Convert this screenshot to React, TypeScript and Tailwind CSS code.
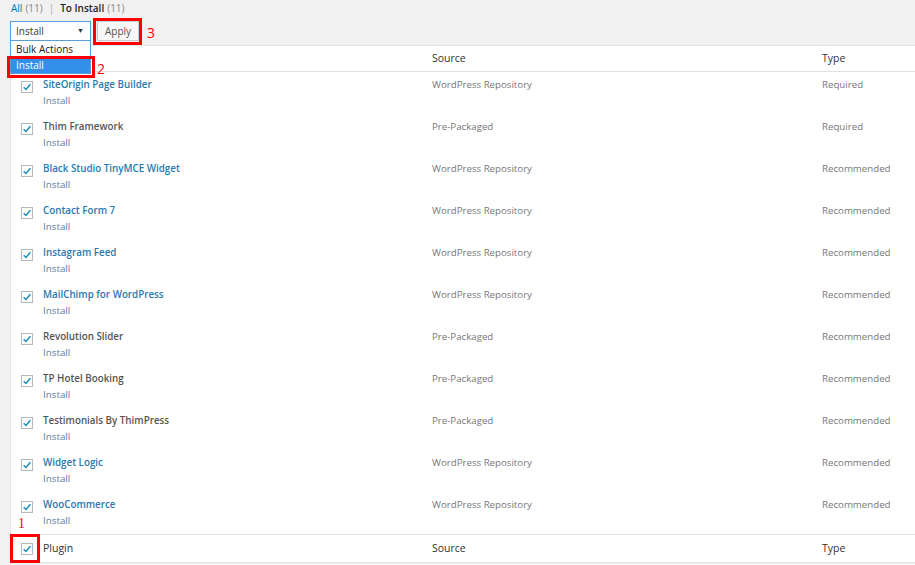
import React from "react";

type Plugin = { name: string; source: string; type: string; link: boolean };

const plugins: Plugin[] = [
  { name: "SiteOrigin Page Builder", source: "WordPress Repository", type: "Required", link: true },
  { name: "Thim Framework", source: "Pre-Packaged", type: "Required", link: false },
  { name: "Black Studio TinyMCE Widget", source: "WordPress Repository", type: "Recommended", link: true },
  { name: "Contact Form 7", source: "WordPress Repository", type: "Recommended", link: true },
  { name: "Instagram Feed", source: "WordPress Repository", type: "Recommended", link: true },
  { name: "MailChimp for WordPress", source: "WordPress Repository", type: "Recommended", link: true },
  { name: "Revolution Slider", source: "Pre-Packaged", type: "Recommended", link: false },
  { name: "TP Hotel Booking", source: "Pre-Packaged", type: "Recommended", link: false },
  { name: "Testimonials By ThimPress", source: "Pre-Packaged", type: "Recommended", link: false },
  { name: "Widget Logic", source: "WordPress Repository", type: "Recommended", link: true },
  { name: "WooCommerce", source: "WordPress Repository", type: "Recommended", link: true },
];

function Check() {
  return (
    <span className="flex h-[12px] w-[12px] items-center justify-center border border-[#b4b9be] bg-white">
      <svg viewBox="0 0 12 12" className="h-[10px] w-[10px]">
        <path d="M2 6.2 L4.8 9 L10 2.6" fill="none" stroke="#1e8cbe" strokeWidth="1.8" />
      </svg>
    </span>
  );
}

export default function App() {
  return (
    <div
      className="relative h-[565px] w-[915px] overflow-hidden bg-[#f1f1f1] text-[10px] text-[#444]"
      style={{ fontFamily: '"Open Sans", "Liberation Sans", sans-serif' }}
    >
      {/* status filter */}
      <div className="flex h-[18px] items-center pl-[11px] pb-[1px] text-[10px]">
        <span className="text-[#0073aa]">All</span>
        <span className="ml-[3px] text-[#888]">(11)</span>
        <span className="mx-[6px] text-[#aaa]">|</span>
        <span className="font-semibold text-[#222]">To Install</span>
        <span className="ml-[3px] text-[#888]">(11)</span>
      </div>

      {/* bulk actions bar */}
      <div className="flex h-[27px] items-start gap-[6px] pl-[10px] pt-[3px]">
        <div className="flex h-[20px] w-[81px] items-center justify-between border border-[#5b9dd9] bg-white pl-[5px] pr-[6px] text-[10px] text-[#32373c]">
          <span>Install</span>
          <span className="text-[7px] text-[#333]">▼</span>
        </div>
        <div className="flex h-[20px] w-[42px] items-center justify-center border border-[#ccc] bg-[#f7f7f7] text-[10px] text-[#555]">
          Apply
        </div>
      </div>

      {/* table */}
      <div className="ml-[10px] border border-r-0 border-[#e5e5e5] bg-white">
        <div className="grid h-[26px] grid-cols-[32px_389px_390px_1fr] items-center border-b border-[#e1e1e1] text-[10.5px] text-[#333]">
          <div className="pl-[10px]">
            <Check />
          </div>
          <div>Plugin</div>
          <div>Source</div>
          <div>Type</div>
        </div>

        {plugins.map((p) => (
          <div key={p.name} className="grid h-[42px] grid-cols-[32px_389px_390px_1fr] items-start pt-[6px]">
            <div className="pl-[10px] pt-[3px]">
              <Check />
            </div>
            <div className="flex flex-col">
              <span className={`text-[9.8px] font-semibold leading-[13px] ${p.link ? "text-[#2a79ad]" : "text-[#555]"}`}>
                {p.name}
              </span>
              <span className="mt-[3px] text-[9.8px] leading-[13px] text-[#5b7ca3]">Install</span>
            </div>
            <div className="text-[9.7px] leading-[13px] text-[#777]">{p.source}</div>
            <div className="text-[9.7px] leading-[13px] text-[#777]">{p.type}</div>
          </div>
        ))}

        <div className="grid h-[28px] grid-cols-[32px_389px_390px_1fr] items-center border-t border-[#e1e1e1] text-[10.5px] text-[#333]">
          <div className="pl-[10px]">
            <Check />
          </div>
          <div>Plugin</div>
          <div>Source</div>
          <div>Type</div>
        </div>
      </div>

      {/* open dropdown */}
      <div className="absolute left-[10px] top-[41px] w-[81px] border border-t-0 border-[#5b9dd9] bg-white text-[10px] text-[#222]">
        <div className="h-[16px] pl-[5px] leading-[16px]">Bulk Actions</div>
        <div className="h-[16px] bg-[#3390ea] pl-[5px] leading-[16px] text-white">Install</div>
      </div>

      {/* annotations */}
      <div className="absolute left-[7px] top-[56px] h-[22px] w-[88px] border-[3px] border-[#ff0000]" />
      <div className="absolute left-[97px] top-[61px] text-[14px] leading-[16px] text-[#ff0000]">2</div>
      <div className="absolute left-[93px] top-[18px] h-[27px] w-[49px] border-[3px] border-[#ff0000]" />
      <div className="absolute left-[147px] top-[25px] text-[14px] leading-[16px] text-[#ff0000]">3</div>
      <div className="absolute left-[10px] top-[534px] h-[29px] w-[30px] border-[3px] border-[#ff0000]" />
      <div
        className="absolute left-[18px] top-[516px] text-[14px] leading-[16px] text-[#ff0000]"
        style={{ fontFamily: '"Liberation Serif", serif' }}
      >
        1
      </div>
    </div>
  );
}
